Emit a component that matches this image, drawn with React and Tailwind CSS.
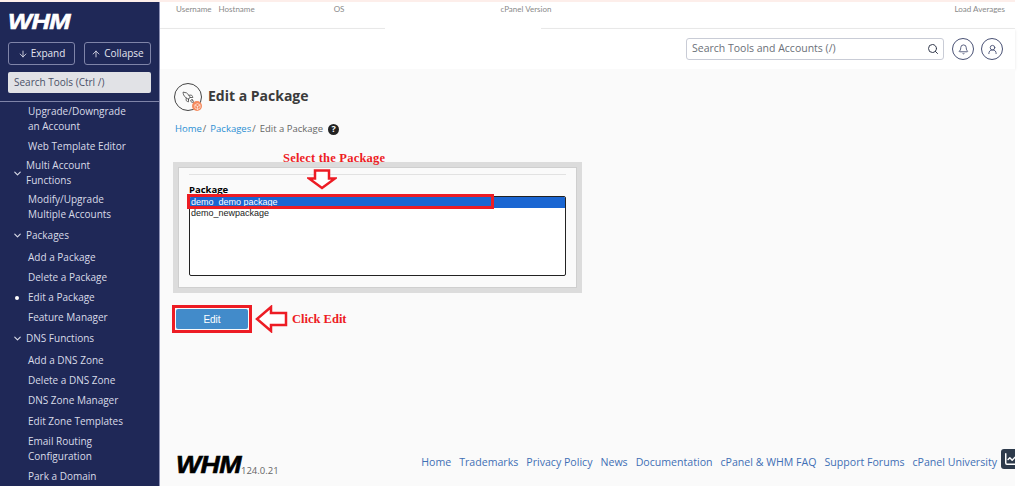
import { ArrowDown, ArrowUp, ChevronDown, Search, Bell, UserRound, Rocket, Box, ChartLine } from "lucide-react";

const navItems = [
  { label: ["Upgrade/Downgrade", "an Account"], mt: "mt-[2px]" },
  { label: ["Web Template Editor"], mt: "mt-[5px]" },
  { label: ["Multi Account", "Functions"], group: true, mt: "mt-[4px]" },
  { label: ["Modify/Upgrade", "Multiple Accounts"], mt: "mt-[4px]" },
  { label: ["Packages"], group: true, mt: "mt-[6px]" },
  { label: ["Add a Package"], mt: "mt-[7px]" },
  { label: ["Delete a Package"], mt: "mt-[5px]" },
  { label: ["Edit a Package"], active: true, mt: "mt-[5px]" },
  { label: ["Feature Manager"], mt: "mt-[5px]" },
  { label: ["DNS Functions"], group: true, mt: "mt-[6px]" },
  { label: ["Add a DNS Zone"], mt: "mt-[7px]" },
  { label: ["Delete a DNS Zone"], mt: "mt-[5px]" },
  { label: ["DNS Zone Manager"], mt: "mt-[5px]" },
  { label: ["Edit Zone Templates"], mt: "mt-[6px]" },
  { label: ["Email Routing", "Configuration"], mt: "mt-[5px]" },
  { label: ["Park a Domain"], mt: "mt-[5px]" },
];

const footerLinks = ["Home", "Trademarks", "Privacy Policy", "News", "Documentation", "cPanel & WHM FAQ", "Support Forums", "cPanel University"];

function WhmLogo({ className }) {
  return (
    <span className={`inline-block origin-left scale-x-[1.16] font-['Liberation_Sans',sans-serif] font-bold italic leading-none tracking-[-0.5px] ${className}`}>
      WHM
    </span>
  );
}

function RedArrow({ dir }) {
  // outline arrow used by the annotations
  if (dir === "down") {
    return (
      <svg width="30" height="21" viewBox="0 0 30 21" fill="white" stroke="#ed1c24" strokeWidth="2.5">
        <path d="M8 1.5h14v8h6L15 19 2 9.5h6z" />
      </svg>
    );
  }
  return (
    <svg width="33" height="28" viewBox="0 0 33 28" fill="white" stroke="#ed1c24" strokeWidth="2.5">
      <path d="M31 8v12H16v6L2 14 16 2v6z" />
    </svg>
  );
}

export default function App() {
  return (
    <div className="h-[486px] w-[1024px] overflow-hidden bg-white font-['Open_Sans',sans-serif]">
      <div className="h-[2px] w-[1015px] bg-[#fdeeea]" />
      <div className="flex h-[484px] w-[1015px]">
        {/* SIDEBAR */}
        <aside className="flex w-[160px] shrink-0 flex-col overflow-hidden border-r border-[#8f93b8] bg-[#1f2857] text-[#d9dbe8]">
          <div className="h-[27px] shrink-0 pl-[8px] pt-[9px]">
            <WhmLogo className="text-[22px] text-white [-webkit-text-stroke:0.6px_white]" />
          </div>
          <div className="mt-[13px] flex shrink-0 gap-[9px] px-[8px]">
            <div className="flex h-[23px] w-[67px] items-center justify-center gap-[3px] rounded-[3px] border border-[#7f84a8] text-[10px] text-[#e4e5ef]">
              <ArrowDown size={10} /> Expand
            </div>
            <div className="flex h-[23px] w-[67px] items-center justify-center gap-[3px] rounded-[3px] border border-[#7f84a8] text-[10px] text-[#e4e5ef]">
              <ArrowUp size={10} /> Collapse
            </div>
          </div>
          <div className="mx-[8px] mt-[7px] flex h-[21px] w-[143px] shrink-0 items-center rounded-[2px] bg-[#e1e2e6] pl-[6px] text-[10px] text-[#4a5068]">
            Search Tools (Ctrl /)
          </div>
          <div className="mt-[8px] shrink-0 border-t border-[#7f84a8]" />

          <nav className="shrink-0 text-[10px] leading-[15px]">
            {navItems.map((item) => (
              <div key={item.label[0]} className={`flex items-center ${item.mt}`}>
                <div className="flex w-[27px] shrink-0 justify-center pl-[7px]">
                  {item.group && <ChevronDown size={11} strokeWidth={2.5} className="text-[#d9dbe8]" />}
                  {item.active && <span className="h-[4px] w-[4px] rounded-full bg-white" />}
                </div>
                <div className={item.group ? "-ml-[1px]" : "ml-[1px]"}>
                  {item.label.map((line) => (
                    <div key={line} className="whitespace-nowrap">{line}</div>
                  ))}
                </div>
              </div>
            ))}
          </nav>
        </aside>

        <div className="relative flex min-w-0 flex-1 flex-col">
          {/* SERVER INFO */}
          <div className="flex h-[27px] shrink-0 border-b border-[#ececec] pt-[1px] font-['Lato',sans-serif] text-[8px] leading-[12px] text-[#8a8a8a]">
            <span className="ml-[16px]">Username</span>
            <span className="ml-[7px]">Hostname</span>
            <span className="ml-[79px]">OS</span>
            <span className="ml-[156px]">cPanel Version</span>
            <span className="ml-auto mr-[10px]">Load Averages</span>
          </div>
          <div className="absolute left-[225px] top-[25px] h-[3px] w-[156px] bg-white" />

          {/* TOP BAR */}
          <div className="flex h-[40px] shrink-0 items-center justify-end bg-white shadow-[0_1px_3px_rgba(0,0,0,0.1)]">
            <div className="flex h-[22px] w-[258px] items-center justify-between rounded-[3px] border border-[#c9ccd6] pl-[5px] pr-[4px] text-[10.5px] text-[#6b7078]">
              Search Tools and Accounts (/)
              <Search size={12} strokeWidth={2} className="text-[#333a4d]" />
            </div>
            <div className="ml-[8px] flex h-[22px] w-[22px] items-center justify-center rounded-full border border-[#4a5275] text-[#4a5275]">
              <Bell size={11} />
            </div>
            <div className="ml-[7px] mr-[12px] flex h-[22px] w-[22px] items-center justify-center rounded-full border border-[#4a5275] text-[#4a5275]">
              <UserRound size={11} />
            </div>
          </div>

          {/* MAIN */}
          <main className="flex min-h-0 flex-1 flex-col bg-[#fafafa] pl-[13px]">
            <div className="mt-[14px] flex items-center pl-[1px]">
              <div className="relative flex h-[28px] w-[28px] items-center justify-center rounded-full border border-[#444]">
                <Rocket size={13} strokeWidth={1.5} className="-scale-x-100 text-[#444]" />
                <span className="absolute -bottom-[1px] -right-[1px] flex h-[10px] w-[10px] items-center justify-center rounded-full bg-[#f58b5f]">
                  <Box size={7} className="text-white" />
                </span>
              </div>
              <h1 className="mb-[4px] ml-[6px] text-[14px] font-bold text-[#3b3b3b]">Edit a Package</h1>
            </div>
            <div className="mt-[11px] flex h-[14px] items-center pl-[2px] text-[9.5px] text-[#666]">
              <span className="text-[#2b8fd3]">Home</span>
              <span className="ml-[1px] mr-[4px]">/</span>
              <span className="text-[#2b8fd3]">Packages</span>
              <span className="ml-[1px] mr-[4px]">/</span>
              Edit a Package
              <span className="ml-[5px] flex h-[11px] w-[11px] items-center justify-center rounded-full bg-[#222] text-[9px] font-bold text-white">?</span>
            </div>

            {/* PACKAGE FORM */}
            <div className="relative mt-[26px] h-[131px] w-[409px] shrink-0 bg-[#dcdcdc] p-[5px]">
              <div className="h-[121px] border border-[#cfcfcf] bg-[#fafafa] px-[10px] pt-[6px]">
                <div className="border-t border-[#e2e2e2]" />
                <div className="mt-[9px] text-[9.5px] font-bold leading-[12px] text-black">Package</div>
                <div className="h-[80px] w-[377px] overflow-hidden rounded-[2px] border border-[#222] bg-white font-['Liberation_Sans',sans-serif] text-[9px] leading-[11px]">
                  <div className="h-[11px] bg-[#1a66d2] pl-[1px] text-white">demo_demo package</div>
                  <div className="h-[11px] pl-[1px] text-[#222]">demo_newpackage</div>
                </div>
              </div>
              {/* annotations over the form */}
              <div className="absolute left-[14px] top-[32px] h-[15px] w-[307px] border-[3px] border-[#ed1c24]" />
              <div className="absolute left-[110px] -top-[12px] font-['Liberation_Serif',serif] text-[12.5px] font-bold leading-[16px] tracking-[0.2px] text-[#ed1c24]">Select the Package</div>
              <div className="absolute left-[134px] top-[7px]"><RedArrow dir="down" /></div>
            </div>

            {/* EDIT BUTTON */}
            <div className="mt-[12px] -ml-[1px] flex items-center">
              <div className="flex h-[28px] w-[80px] items-center justify-center border-[3px] border-[#ed1c24] p-[1px]">
                <div className="flex h-full w-full items-center justify-center rounded-[2px] bg-[#428bca] font-['Liberation_Sans',sans-serif] text-[10px] text-white">Edit</div>
              </div>
              <div className="ml-[3px]"><RedArrow dir="left" /></div>
              <span className="ml-[4px] mt-[1px] font-['Liberation_Serif',serif] text-[12.5px] font-bold text-[#ed1c24]">Click Edit</span>
            </div>

            {/* FOOTER */}
            <div className="mt-auto flex h-[44px] shrink-0 items-start">
              <div className="mt-[12px] flex items-end pl-[3px]">
                <WhmLogo className="w-[65px] text-[23px] text-black [-webkit-text-stroke:0.6px_black]" />
                <span className="text-[9.5px] leading-[13px] text-[#666]">124.0.21</span>
              </div>
              <div className="ml-auto mt-[12px] flex gap-[8px] pr-[18px] text-[10.6px] leading-[16px] text-[#3f6fb5]">
                {footerLinks.map((link) => (
                  <span key={link} className="whitespace-nowrap">{link}</span>
                ))}
              </div>
              <div className="absolute left-[841px] top-[447px] flex h-[20px] w-[14px] items-center overflow-hidden rounded-l-[3px] bg-[#2d3a4b] pl-[3px]">
                <ChartLine size={14} strokeWidth={2.5} className="shrink-0 text-white" />
              </div>
            </div>
          </main>
        </div>
      </div>
    </div>
  );
}
